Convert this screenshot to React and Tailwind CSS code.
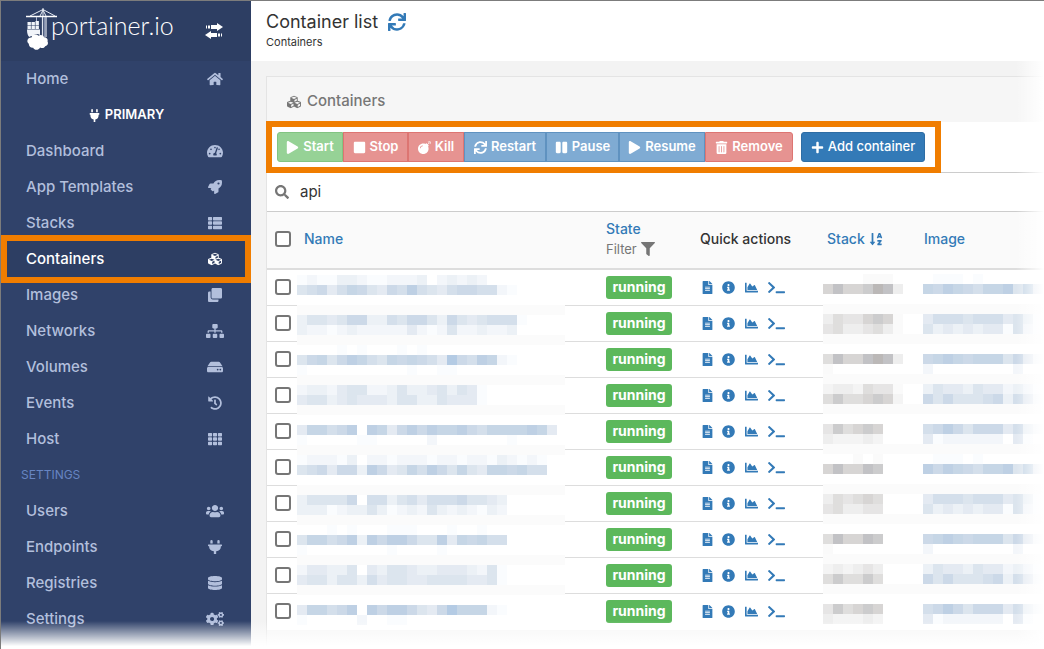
import React from "react";
import {
  FaHome, FaPlug, FaTachometerAlt, FaRocket, FaThList, FaCubes, FaClone, FaSitemap, FaHdd,
  FaHistory, FaTh, FaUsers, FaDatabase, FaCogs, FaSync, FaPlay, FaStop, FaBomb, FaPause,
  FaTrashAlt, FaPlus, FaSearch, FaFilter, FaFileAlt, FaInfoCircle, FaChartArea, FaTerminal,
  FaSortAlphaDown,
} from "react-icons/fa";

const mainLinks = [
  ["Dashboard", FaTachometerAlt, "w-4"],
  ["App Templates", FaRocket],
  ["Stacks", FaThList],
  ["Containers", FaCubes],
  ["Images", FaClone],
  ["Networks", FaSitemap, "w-[18px]"],
  ["Volumes", FaHdd, "w-4"],
  ["Events", FaHistory],
  ["Host", FaTh],
];

const settingsLinks = [
  ["Users", FaUsers, "w-[18px]"],
  ["Endpoints", FaPlug],
  ["Registries", FaDatabase],
  ["Settings", FaCogs, "w-[18px]"],
];

const green = "bg-[#96d296] border-[#82c482]";
const red = "bg-[#e69391] border-[#dd7572]";
const blue = "bg-[#7fabd3] border-[#5f92c0]";

const actions = [
  ["Start", FaPlay, green + " w-[66px] rounded-l-[3px]"],
  ["Stop", FaStop, red + " w-[65px]"],
  ["Kill", FaBomb, red + " w-[56px]"],
  ["Restart", FaSync, blue + " w-[82px]"],
  ["Pause", FaPause, blue + " w-[73px]"],
  ["Resume", FaPlay, blue + " w-[86px]"],
  ["Remove", FaTrashAlt, red + " w-[88px] rounded-r-[3px]"],
];

/* Masked values: one string per 10px line, one digit of ink density per 10px cell. */
const nameLines = [
  "12113321122230232320000000", "56746875476965467766210000", "", "=",
  "3554577336577537545666100", "3221232222242125223223", "=",
  "00001010001010", "578579865878764a7698210", "10000000000100110", "=",
  "2332455223533453541", "4553454443553354441", "=", "",
  "48867909847979889768888984", "1000001100000200000001", "=",
  "1222130221222122122132121", "5674773974586975854887866", "", "=",
  "355557066356466675543", "333123353123253232132", "=",
  "000101000111000100100", "588679397997559487866", "1000000001000010", "=",
  "244335043554334443251", "455355364554455554451", "=", "",
  "488679097997547a88821", "1000002001100", "", "", "",
];

const stackLines = [
  "0000111", "68667983", "", "=", "35446761", "45334531", "=", "", "58668983", "1", "=",
  "23325441", "57556762", "=", "", "475676", "322232", "=", "000101", "686687", "", "=",
  "354565", "453344", "=", "", "586687", "1", "=", "232343", "575575", "=", "",
  "475676", "322232", "", "",
];

const imageLines = [
  "0111010000000", "8798768895842", "", "=", "4666566645310", "5343434415210", "=", "",
  "7898788857421", "2000000002000", "=", "3544354423210", "7575556736421", "=", "",
  "6797577746321", "4122222204100", "=", "0111010000000", "9798768895842", "", "=",
  "4666566645310", "5343434415210", "=", "", "7898788857421", "2000000002000", "=",
  "3544354423210", "7575556736421", "=", "", "6797577746321", "4122222204100", "", "",
];

const blueInk = {
  1: "#fafcfe", 2: "#f3f6fa", 3: "#ecf1f6", 4: "#e4eaf2", 5: "#dce5ee",
  6: "#d4dfeb", 7: "#ccd9e8", 8: "#c6d6e6", 9: "#bed0e4", a: "#b4cbe4",
};
const grayInk = {
  1: "#fafafa", 2: "#f4f4f4", 3: "#eeeeee", 4: "#e6e5e5", 5: "#dfdedd",
  6: "#d7d5d4", 7: "#cccccd", 8: "#c2c2c5", 9: "#bbb8b7",
};

function Masked({ lines, row, top, ink }) {
  return (
    <svg className="block h-9 w-full" aria-hidden="true" shapeRendering="crispEdges">
      {lines.map((line, k) => {
        const y = top + k * 10 - row * 36;
        if (y <= -10 || y >= 36) return null;
        if (line === "=") return <rect key={k} x="0" y={y} width="100%" height="10" fill="#fbfbfb" />;
        return [...line].map((c, i) =>
          c === "0" ? null : <rect key={k + "-" + i} x={i * 10} y={y} width="10" height="10" fill={ink[c]} />
        );
      })}
    </svg>
  );
}

function Logo() {
  return (
    <svg className="h-[44px] w-[32px] shrink-0" viewBox="0 0 32 44" fill="none" aria-hidden="true">
      <path d="M0 9.500h31" stroke="#fff" strokeWidth="1.500" />
      <path d="M4 9 17 2.500 29 9M17 1v8M14 9l3-6 3 6" stroke="#e9edf5" strokeWidth="1" />
      <path d="M16.500 10v20M20 10v20" stroke="#dfe4ee" strokeWidth="1.200" />
      <path d="M18.300 10v20" stroke="#9aa6c0" strokeWidth="1" />
      <path d="M10.500 10v5" stroke="#aab5cc" strokeWidth="1" />
      <g fill="#f1f4f9">
        <path d="M1.500 15h3.400v3.200H1.500zM5.500 15h3.400v3.200H5.500zM9.500 14h3.400v4.200H9.500zM1.500 18.800h3.400V22H1.500zM5.500 18.800h3.400V22H5.500zM9.500 18.800h3.400V22H9.500z" />
        <path d="M1 22.500h13v5.500c-2.500-2-6-1-7 1.200-1.500-.3-2.500 0-3.500.7C1.800 29 1 26.500 1 22.500z" />
      </g>
      <path
        fill="#fff"
        d="M5.500 30.500c.5-3 5-4 7-1.700 2-1.500 5-.5 5.500 1.500 2.500-.2 4.200 1.800 3.500 4 1.200 2.200 0 4.700-2.300 4.900-1 2-3.500 2.500-5 1.200-1.800 3.200-5.700 3.200-7 .3-2.700.3-4.700-1.500-4.300-4C-.1 34.800 1.500 30.300 5.500 30.500z"
      />
    </svg>
  );
}

function ToggleIcon() {
  return (
    <svg className="h-4 w-[18px]" viewBox="0 0 18 16" fill="#fff" aria-hidden="true">
      <path d="M1 2.500h1v3H1zM3 2.500h2v3H3zM6 2h6V0l6 4-6 4V6H6z" />
      <path d="M16 10.500h1v3h-1zM13 10.500h2v3h-2zM12 10H6V8l-6 4 6 4v-2h6z" />
    </svg>
  );
}

function NavItem({ label, icon: Icon, active, iconWidth = "w-[14px]" }) {
  return (
    <li className="relative">
      <a
        href="#"
        className={
          "flex h-9 items-center justify-between pl-[25px] text-[15px] font-medium leading-5 " +
          (active ? "bg-[#2d3e63] text-white" : "text-[#b2bfdc]")
        }
      >
        <span>{label}</span>
        <span className="flex w-[73px] justify-center"><Icon preserveAspectRatio="none" className={"h-[14px] " + iconWidth} /></span>
      </a>
      {active && <span className="pointer-events-none absolute -inset-y-[6px] inset-x-0 z-10 border-[6px] border-[#f07d00]" />}
    </li>
  );
}

function Sidebar() {
  return (
    <aside className="w-[250px] shrink-0 bg-[#30426a]">
      <div className="flex h-[60px] items-start justify-between bg-[#2d3e63] pl-[25px] pt-[6px]">
        <a href="#" className="flex text-white">
          <Logo />
          <span className="-ml-[7px] font-['Lato'] text-[25px] font-light leading-9">portainer.io</span>
        </a>
        <button type="button" aria-label="Toggle sidebar" className="flex w-[74px] justify-center pt-4"><ToggleIcon /></button>
      </div>
      <nav>
        <ul>
          <NavItem label="Home" icon={FaHome} iconWidth="w-4" />
          <li className="flex h-9 items-center justify-center gap-1 text-[13px] font-semibold text-white">
            <FaPlug className="h-[13px] w-[13px]" />PRIMARY
          </li>
          {mainLinks.map(([label, icon, width]) => (
            <NavItem key={label} label={label} icon={icon} iconWidth={width} active={label === "Containers"} />
          ))}
          <li className="flex h-9 items-center pl-5 text-xs text-[#6785c2]">SETTINGS</li>
          {settingsLinks.map(([label, icon, width]) => (
            <NavItem key={label} label={label} icon={icon} iconWidth={width} />
          ))}
        </ul>
      </nav>
    </aside>
  );
}

function Checkbox({ label }) {
  return (
    <input
      type="checkbox"
      aria-label={label}
      className="block h-4 w-4 appearance-none rounded-[3px] border-2 border-[#767676] bg-white checked:bg-[#337ab7]"
    />
  );
}

function Toolbar() {
  return (
    <div className="relative flex h-[51px] items-center gap-2 border-b border-[#ccc] pl-[10px]">
      <div className="flex">
        {actions.map(([label, Icon, tone]) => (
          <button
            key={label}
            type="button"
            className={"flex h-[30px] items-center justify-center gap-1 border text-[13px] font-semibold text-white " + tone}
          >
            <Icon className="h-[13px] w-[13px]" />{label}
          </button>
        ))}
      </div>
      <button
        type="button"
        className="flex h-[30px] w-[124px] items-center justify-center gap-1 rounded-[3px] border border-[#2e6da4] bg-[#337ab7] text-[13px] font-medium text-white"
      >
        <FaPlus className="h-[13px] w-[13px]" />Add container
      </button>
      <span className="pointer-events-none absolute -bottom-px -left-px -top-px w-[675px] border-[6px] border-[#f07d00]" />
    </div>
  );
}

const line = "border-b border-[#ddd] ";

function Row({ index, last }) {
  const edge = last ? "border-b border-white " : line;
  return (
    <tr className="h-9">
      <td className={edge + "pb-px pl-2"}><Checkbox label={"Select container " + (index + 1)} /></td>
      <td><Masked lines={nameLines} row={index} top={5} ink={blueInk} /></td>
      <td className={edge + "pl-[41px]"}>
        <span className="flex h-[23px] w-[66px] items-center justify-center rounded-[3px] bg-[#5cb85c] pb-px text-sm font-bold text-white">running</span>
      </td>
      <td className={edge + "pb-px"}>
        <div className="flex items-center text-[#337ab7]">
          <a href="#" aria-label="Logs" className="flex w-[22px] pl-px"><FaFileAlt className="h-[13px] w-[13px]" /></a>
          <a href="#" aria-label="Details" className="flex w-[23px]"><FaInfoCircle className="h-[13px] w-[13px]" /></a>
          <a href="#" aria-label="Stats" className="flex w-[23px]"><FaChartArea className="h-[13px] w-[13px]" /></a>
          <a href="#" aria-label="Console" className="flex"><FaTerminal className="h-[13px] w-[17px]" preserveAspectRatio="none" /></a>
        </div>
      </td>
      <td><Masked lines={stackLines} row={index} top={4} ink={grayInk} /></td>
      <td><Masked lines={imageLines} row={index} top={4} ink={blueInk} /></td>
    </tr>
  );
}

function ContainerTable() {
  return (
    <table className="w-full table-fixed border-separate border-spacing-0 text-left">
      <colgroup>
        <col className="w-[30px]" />
        <col className="w-[268px]" />
        <col className="w-[135px]" />
        <col className="w-[123px]" />
        <col className="w-[100px]" />
        <col />
      </colgroup>
      <thead className="bg-[#fafafa] text-sm text-[#337ab7] [&_th]:border-b-2 [&_th]:border-[#ddd] [&_th]:pb-[2px] [&_th]:font-medium">
        <tr className="h-[58px]">
          <th className="pl-2"><Checkbox label="Select all containers" /></th>
          <th className="pl-[7px]"><a href="#">Name</a></th>
          <th className="pl-[41px]">
            <a href="#" className="block leading-5">State</a>
            <button type="button" className="flex items-center gap-1 text-[13px] font-normal leading-5 text-[#767676]">
              Filter<FaFilter className="h-[14px] w-[14px]" />
            </button>
          </th>
          <th className="text-[#333]">Quick actions</th>
          <th className="pl-1"><a href="#" className="flex items-center gap-1">Stack<FaSortAlphaDown className="h-[14px] w-[14px]" /></a></th>
          <th className="pl-px"><a href="#">Image</a></th>
        </tr>
      </thead>
      <tbody>
        {Array.from({ length: 10 }, (_, i) => <Row key={i} index={i} last={i === 9} />)}
      </tbody>
    </table>
  );
}

export default function App() {
  return (
    <div className="relative flex min-h-screen overflow-hidden border-l border-t border-[#7c7c7c] bg-[#f3f3f3] font-['Inter',sans-serif] text-[#333]">
      <Sidebar />
      <main className="flex min-w-0 flex-1 flex-col">
        <header className="h-[60px] bg-white pl-[15px] pt-[9px]">
          <h1 className="flex items-center gap-[10px] text-lg leading-6">
            Container list
            <button type="button" aria-label="Refresh" className="text-[#337ab7]"><FaSync className="h-[18px] w-[18px]" /></button>
          </h1>
          <p className="text-[11px] leading-4">Containers</p>
        </header>
        <section className="ml-[15px] mt-[15px] flex flex-1 flex-col border-l border-t border-[#e4e4e4] bg-[#f6f6f6]">
          <h2 className="flex h-[45px] items-center gap-[6px] pl-5 pt-1 text-[15px] font-medium text-[#767676]">
            <FaCubes className="h-[14px] w-[14px]" />Containers
          </h2>
          <div className="bg-white">
            <Toolbar />
            <label className="flex h-[39px] items-center gap-[11px] border-b border-[#ccc] pl-2">
              <FaSearch className="h-[14px] w-[14px] text-[#767676]" />
              <input type="text" aria-label="Search" defaultValue="api" className="flex-1 bg-transparent text-[15px] outline-none" />
            </label>
            <ContainerTable />
          </div>
        </section>
      </main>
      <div className="pointer-events-none absolute inset-y-0 right-0 z-20 -mt-px w-7 bg-linear-to-r from-transparent to-white" />
      <div className="pointer-events-none absolute inset-x-0 bottom-0 z-20 -ml-px h-7 bg-linear-to-b from-transparent to-white to-90%" />
    </div>
  );
}
